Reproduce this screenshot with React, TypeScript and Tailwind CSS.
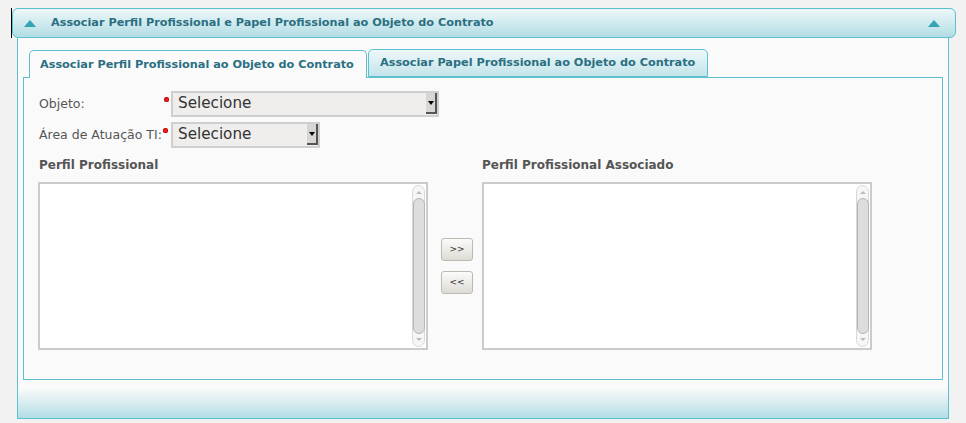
import React from "react";

const font = "font-['DejaVu_Sans',Verdana,sans-serif]";

function Req() {
  return <span className="mt-[-9px] ml-[1px] inline-block h-[5px] w-[5px] shrink-0 rounded-full bg-[#e0202a] shadow-[inset_0_0_0_1px_#c11]" />;
}

function Select({ width }: { width: string }) {
  return (
    <div className={`${width} flex h-[26px] border-2 border-[#cfcfcf] bg-[#efeeec]`}>
      <div className="flex flex-1 items-center pl-[5px] text-[15.2px] leading-none text-[#333]">Selecione</div>
      <div className="mb-[1px] flex w-[11px] items-center justify-center border-r-2 border-b-2 border-r-[#555] border-b-[#555] bg-[#d8d6d2]">
        <span className="h-0 w-0 border-x-[3px] border-t-[4px] border-x-transparent border-t-black" />
      </div>
    </div>
  );
}

function ListBox() {
  return (
    <div className="flex h-[168px] w-[390px] border-2 border-[#cbcbcb] bg-white">
      <div className="flex-1" />
      <div className="my-[1px] mr-[1px] flex w-[13px] flex-col items-center rounded-full border border-[#d8d8d8] bg-[#f6f6f6]">
        <span className="mt-[5px] h-0 w-0 border-x-[3px] border-b-[3px] border-x-transparent border-b-[#bbb]" />
        <div className="mt-[4px] w-[12px] flex-1 rounded-[6px] border border-[#b8b6b2] bg-[#dfdddb]" />
        <span className="mb-[5px] mt-[4px] h-0 w-0 border-x-[3px] border-t-[3px] border-x-transparent border-t-[#bbb]" />
      </div>
    </div>
  );
}

function MoveButton({ label }: { label: string }) {
  return (
    <button className="flex h-[23px] w-[32px] items-center justify-center rounded-[3px] border border-[#bdbab4] bg-gradient-to-b from-[#fbfbfa] to-[#dedbd5] text-[9px] leading-none text-[#333]">
      {label}
    </button>
  );
}

export default function App() {
  return (
    <div className={`relative h-[423px] w-[966px] overflow-hidden bg-[#f2f2f2] pt-2 ${font}`}>
      <div className="absolute left-[11px] top-2 h-[30px] w-px bg-black" />

      <div className="ml-[12px] flex h-[30px] w-[944px] items-center rounded-[6px] border border-[#5cc0d0] bg-gradient-to-b from-[#eef8f9] to-[#b1dde4] px-[11px]">
        <span className="h-0 w-0 border-x-[6px] border-b-[7px] border-x-transparent border-b-[#34a3b6]" />
        <span className="ml-[15px] flex-1 whitespace-nowrap text-[11.25px] font-bold text-[#2b6f82]">Associar Perfil Profissional e Papel Profissional ao Objeto do Contrato</span>
        <span className="mr-[4px] h-0 w-0 border-x-[6px] border-b-[7px] border-x-transparent border-b-[#34a3b6]" />
      </div>

      <div className="ml-[17px] flex h-[381px] w-[932px] flex-col border-x border-b border-[#5cc0d0] bg-[#fafafa]">
        <div className="mt-[11px] flex items-end pl-[11px]">
          <div className="z-10 flex h-[28px] w-[338px] items-center whitespace-nowrap rounded-t-[5px] border border-b-0 border-[#5cc0d0] bg-[#fafafa] pl-[10px] pt-[2px] text-[11.25px] font-bold text-[#2b6f82]">
            Associar Perfil Profissional ao Objeto do Contrato
          </div>
          <div className="mb-px ml-[1px] flex h-[28px] w-[340px] items-center whitespace-nowrap rounded-t-[5px] border border-[#5cc0d0] bg-gradient-to-b from-[#eef8f9] to-[#c3e4ea] pl-[11px] text-[11.25px] font-bold text-[#2b6f82]">
            Associar Papel Profissional ao Objeto do Contrato
          </div>
        </div>

        <div className="mx-[5px] -mt-px h-[303px] border border-[#5cc0d0] bg-[#fafafa] px-[15px] pt-[13px]">
          <div className="flex items-center">
            <div className="flex w-[130px] items-center text-[12.5px] text-[#555]">
              <span className="flex-1">Objeto:</span>
              <Req />
            </div>
            <div className="ml-[2px]">
              <Select width="w-[268px]" />
            </div>
          </div>
          <div className="mt-[5px] flex items-center">
            <div className="flex w-[130px] items-center text-[12.5px] text-[#555]">
              <span className="whitespace-nowrap">Área de Atuação TI:</span>
              <Req />
            </div>
            <div className="ml-[2px]">
              <Select width="w-[149px]" />
            </div>
          </div>

          <div className="mt-[8px] flex">
            <div>
              <div className="text-[12px] font-bold text-[#555]">Perfil Profissional</div>
              <div className="-ml-px mt-[8px]">
                <ListBox />
              </div>
            </div>
            <div className="ml-[13px] mt-[82px] flex flex-col gap-[10px]">
              <MoveButton label=">>" />
              <MoveButton label="<<" />
            </div>
            <div className="ml-[9px]">
              <div className="text-[12px] font-bold text-[#555]">Perfil Profissional Associado</div>
              <div className="mt-[8px]">
                <ListBox />
              </div>
            </div>
          </div>
        </div>

        <div className="mt-[8px] flex-1 bg-gradient-to-b from-[#fafafa] to-[#b3dee6]" />
      </div>
    </div>
  );
}
